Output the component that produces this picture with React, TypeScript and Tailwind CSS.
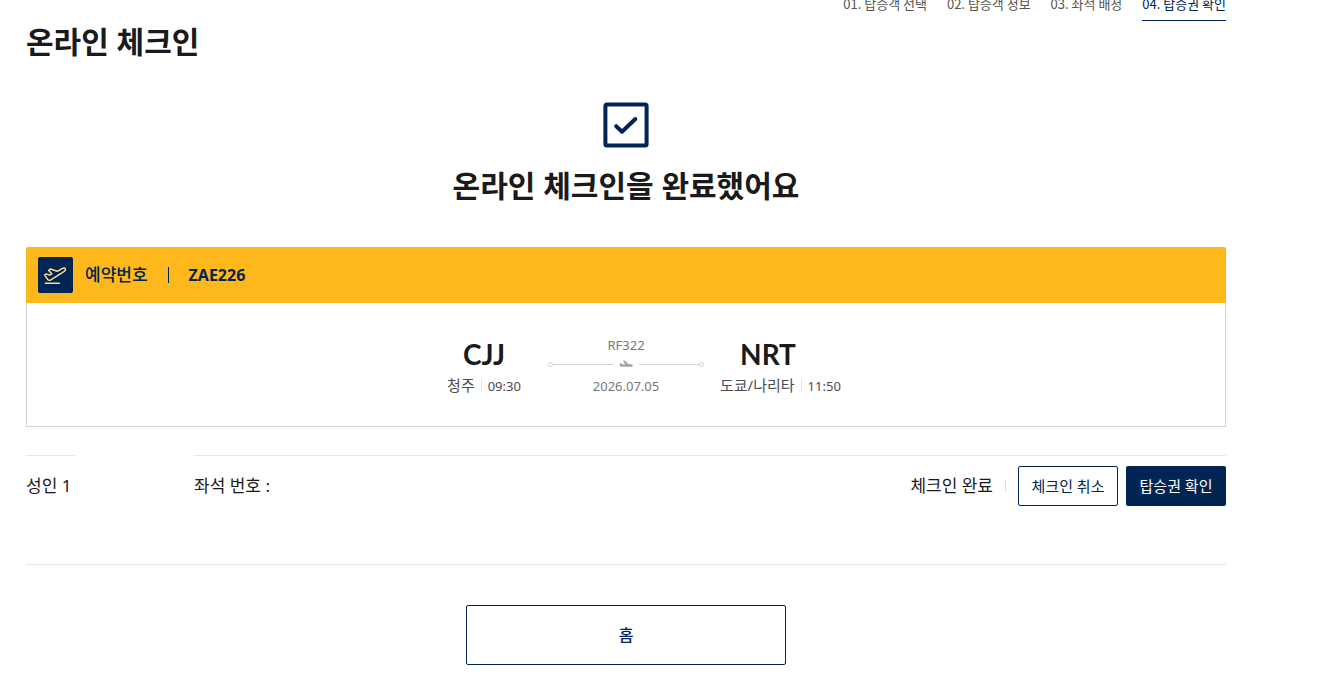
import React from "react";

const steps = ["01. 탑승객 선택", "02. 탑승객 정보", "03. 좌석 배정", "04. 탑승권 확인"];

function CheckBoxIcon() {
  return (
    <svg className="size-[46px]" viewBox="0 0 46 46" fill="none" stroke="#002453" strokeWidth="4" aria-hidden="true">
      <rect x="2.4" y="2.4" width="41.2" height="41.2" rx="1.5" />
      <path d="M13.2 24.2l5.8 5.5L32.3 17" strokeLinecap="round" strokeLinejoin="round" strokeWidth="4" />
    </svg>
  );
}

function TakeoffIcon() {
  return (
    <svg className="h-9 w-[35px]" viewBox="0 0 35 36" fill="none" stroke="#ffdd91" strokeWidth="1.5" strokeLinecap="round" strokeLinejoin="round" aria-hidden="true">
      <path d="M6.600 18l1.600-1.100 3.400 1.200 2.200-1.300-3.300-3.500 1.900-1.300 6.900 2.300 4.700-2.700c1.500-.8 2.900-.7 3.400.2.400 1-.2 2-1.500 2.900L12.800 22.800c-1.100.6-2.300.5-3.100-.4z" />
      <path d="M7.300 26.300h14" />
    </svg>
  );
}

function PlaneIcon() {
  return (
    <svg className="mx-[6px] h-[10px] w-[14px] shrink-0" viewBox="0 0 14 10" fill="#a3a4b0" aria-hidden="true">
      <path d="M.7 4.200h1.200l1.300 1.100h3L3.800 1.400h1.700l4.500 3.900h2.400c.9 0 1.400.6 1.400 1.200 0 .8-.6 1.300-1.500 1.300H2.300C1.400 7.800.9 7.300.8 6.500z" />
    </svg>
  );
}

function Endpoint({ code, city, time }: { code: string; city: string; time: string }) {
  return (
    <div className="w-24 text-center whitespace-nowrap">
      <strong className="block font-['Lato','Noto_Sans_CJK_KR',sans-serif] text-[28px] leading-8 font-bold text-[#1a1a1a]">{code}</strong>
      <p className="mt-[3px] text-[15px] leading-6 text-[#4a4c55]">
        {city}
        <span className="mx-[6px] inline-block h-3 w-px bg-[#e2e2e6]" />
        <span className="text-[13px]">{time}</span>
      </p>
    </div>
  );
}

export default function App() {
  return (
    <div className="min-h-screen bg-white pr-[102px] pl-[26px] font-['Noto_Sans','Noto_Sans_CJK_KR',sans-serif] text-[#1a1a1a]">
      <header className="flex items-start justify-between">
        <h1 className="pt-[22px] text-[30px] leading-10 font-bold">온라인 체크인</h1>
        <nav className="-mt-[6px]">
          <ol className="flex gap-5 font-['Noto_Sans_CJK_KR',sans-serif] text-[13px] leading-5">
            {steps.map((step, i) => (
              <li
                key={step}
                aria-current={i === 3 ? "step" : undefined}
                className={i === 3 ? "border-b border-[#002453] pb-[6px] text-[#002453]" : "pb-[6px] text-[#555]"}
              >
                {step}
              </li>
            ))}
          </ol>
        </nav>
      </header>

      <main>
        <section className="mt-10 flex flex-col items-center">
          <CheckBoxIcon />
          <h2 className="mt-[18px] text-[30px] leading-10 font-bold">온라인 체크인을 완료했어요</h2>
        </section>

        <section className="mt-[41px]">
          <div className="flex h-14 items-center rounded-t-xs bg-[#ffb81c] pl-3 font-bold text-[#002453]">
            <span className="rounded-xs bg-[#002453]">
              <TakeoffIcon />
            </span>
            <span className="ml-3 text-[17px] leading-6 font-medium">예약번호</span>
            <span className="mx-5 h-4 w-px bg-[#002453]" />
            <span className="text-base leading-6">ZAE226</span>
          </div>
          <div className="flex justify-center gap-4 border border-t-0 border-[#d3d3d6] pt-[35px] pb-7">
            <Endpoint code="CJJ" city="청주" time="09:30" />
            <div className="-mt-[3px] w-[156px] text-center text-[13px] leading-5 text-[#75777f]">
              <p>RF322</p>
              <div className="mt-1 flex items-center">
                <span className="size-[5px] rounded-full border border-[#cfcfd4]" />
                <span className="h-px flex-1 bg-[#cfcfd4]" />
                <PlaneIcon />
                <span className="h-px flex-1 bg-[#cfcfd4]" />
                <span className="size-[5px] rounded-full border border-[#cfcfd4]" />
              </div>
              <p className="mt-[7px]">2026.07.05</p>
            </div>
            <Endpoint code="NRT" city="도쿄/나리타" time="11:50" />
          </div>
        </section>

        <section className="mt-7 flex border-b border-[#e8e8e8] text-[17px] leading-6">
          <div className="w-[50px] border-t border-[#e8e8e8] pt-[18px] whitespace-nowrap">성인 1</div>
          <div className="ml-[118px] flex flex-1 items-start justify-between border-t border-[#e8e8e8] pt-[10px] pb-[58px]">
            <p className="pt-2">좌석 번호 :</p>
            <div className="flex items-center">
              <span>체크인 완료</span>
              <span className="mx-3 h-3 w-px bg-[#dcdcdc]" />
              <button type="button" className="h-10 w-[100px] rounded-xs border border-[#002453] text-[15px] text-[#002453]">
                체크인 취소
              </button>
              <button type="button" className="ml-2 h-10 w-[100px] rounded-xs bg-[#002453] text-[15px] text-white">
                탑승권 확인
              </button>
            </div>
          </div>
        </section>

        <div className="mt-10 flex justify-center">
          <button type="button" className="h-[60px] w-80 rounded-xs border border-[#002453] text-base font-medium text-[#002453]">
            홈
          </button>
        </div>
      </main>
    </div>
  );
}
